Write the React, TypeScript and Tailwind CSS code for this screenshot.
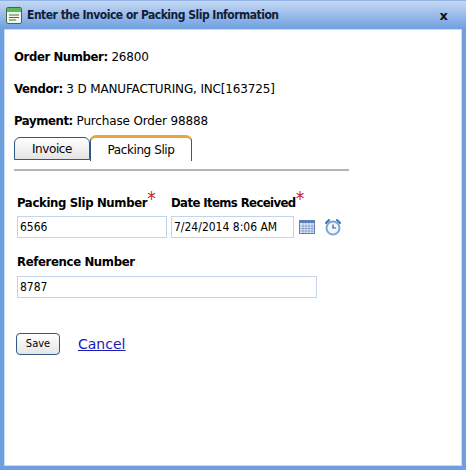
import React from "react";

const font = { fontFamily: '"DejaVu Sans", sans-serif' };
const narrow = { fontFamily: '"DejaVu Sans Condensed", "DejaVu Sans", sans-serif' };

const Required = () => (
  <span className="text-[#c8202a] text-[19px] leading-none font-normal relative top-[-2px]">*</span>
);

const WindowIcon = () => (
  <svg width="16" height="17" viewBox="0 0 16 17">
    <rect x="0.5" y="0.5" width="15" height="16" rx="1.5" fill="#f4f8ec" stroke="#3d6b4a" />
    <rect x="1" y="1" width="14" height="4" fill="#5cb85c" />
    <path d="M3 8h10M3 10.5h10M3 13h7" stroke="#3d7a3d" strokeWidth="1" />
  </svg>
);

const CalendarIcon = () => (
  <svg width="16" height="14" viewBox="0 0 16 14">
    <rect x="0.5" y="0.5" width="15" height="13" fill="#e6edf8" stroke="#5f7fb5" />
    <rect x="1" y="1" width="14" height="2" fill="#5f7fb5" />
    <path d="M1 6h14M1 8.5h14M1 11h14M4 3v10M7 3v10M10 3v10M13 3v10" stroke="#8ea6d2" strokeWidth="1" />
  </svg>
);

const ClockIcon = () => (
  <svg width="18" height="18" viewBox="0 0 18 18">
    <path d="M2 5l3-3M16 5l-3-3" stroke="#3f6fb0" strokeWidth="2" strokeLinecap="round" />
    <circle cx="9" cy="10" r="6.5" fill="#f2f6fc" stroke="#7ba3d8" strokeWidth="2" />
    <path d="M9 6.5V10h3" stroke="#34598f" strokeWidth="1.2" fill="none" />
  </svg>
);

const App = () => {
  return (
    <div style={font} className="w-[466px] h-[470px] bg-[#6f9fdf] flex flex-col overflow-hidden">
      <div className="h-[29px] shrink-0 flex items-center pl-[6px] pr-[18px] bg-gradient-to-b from-[#c5d8f3] to-[#6f9fdf] border-t border-[#8fb2e6]">
        <WindowIcon />
        <span style={narrow} className="ml-[5px] text-[12px] font-bold text-[#10203a] tracking-[-0.5px] whitespace-nowrap">
          Enter the Invoice or Packing Slip Information
        </span>
        <span className="ml-auto text-[13px] font-bold text-[#111] relative top-[1px]">x</span>
      </div>
      <div className="flex-1 mx-[4px] mb-[4px] bg-white border border-[#c6dcf7] pt-[19px] text-black">
        <div className="pl-[9px] flex flex-col gap-[16px] text-[12px] leading-[16px] tracking-[-0.15px]">
          <p><b style={narrow} className="text-[13px] tracking-[-0.4px]">Order Number:</b> 26800</p>
          <p><b style={narrow} className="text-[13px] tracking-[-0.4px]">Vendor:</b> 3 D MANUFACTURING, INC[163725]</p>
          <p><b style={narrow} className="text-[13px] tracking-[-0.4px]">Payment:</b> Purchase Order 98888</p>
        </div>
        <div className="ml-[9px] mt-[6px] w-[335px] h-[36px] border-b-2 border-[#b4b4b4] flex items-start text-[12px] tracking-[-0.4px]">
          <div className="w-[76px] h-[23px] mt-[2px] flex items-center justify-center bg-gradient-to-b from-white to-[#e4e4e4] border border-[#2f5a82] rounded-t-[6px]">
            Invoice
          </div>
          <div className="w-[102px] h-[26px] flex items-center justify-center bg-white border-x border-[#2f5a82] border-t-[3px] border-t-[#e8a63a] rounded-t-[6px]">
            Packing Slip
          </div>
        </div>
        <div className="pl-[12px] mt-[20px] flex gap-[4px]">
          <div className="flex flex-col w-[150px]">
            <label style={narrow} className="h-[20px] text-[13px] font-bold tracking-[-0.35px] whitespace-nowrap">Packing Slip Number<Required /></label>
            <input style={narrow} readOnly value="6566" className="mt-[5px] w-[150px] h-[22px] border border-[#c3d5e8] px-[2px] text-[12px] outline-none" />
          </div>
          <div className="flex flex-col">
            <label style={narrow} className="h-[20px] text-[13px] font-bold tracking-[-0.6px] whitespace-nowrap">Date Items Received<Required /></label>
            <div className="mt-[5px] flex items-center">
              <input style={narrow} readOnly value="7/24/2014 8:06 AM" className="w-[123px] h-[22px] border border-[#c3d5e8] px-[2px] text-[12px] outline-none" />
              <span className="ml-[5px]"><CalendarIcon /></span>
              <span className="ml-[9px]"><ClockIcon /></span>
            </div>
          </div>
        </div>
        <div className="pl-[12px] mt-[14px] flex flex-col">
          <label style={narrow} className="h-[20px] text-[13px] font-bold tracking-[-0.35px]">Reference Number</label>
          <input style={narrow} readOnly value="8787" className="mt-[4px] w-[300px] h-[22px] border border-[#c3d5e8] px-[2px] text-[12px] outline-none" />
        </div>
        <div className="pl-[11px] mt-[35px] flex items-center">
          <button style={narrow} className="w-[44px] h-[22px] border border-[#2f5a82] rounded-[4px] bg-gradient-to-b from-white to-[#e6e6e6] text-[11px]">Save</button>
          <a className="ml-[18px] text-[14px] text-[#1a1ab8] underline" href="#">Cancel</a>
        </div>
      </div>
    </div>
  );
};

export default App;
